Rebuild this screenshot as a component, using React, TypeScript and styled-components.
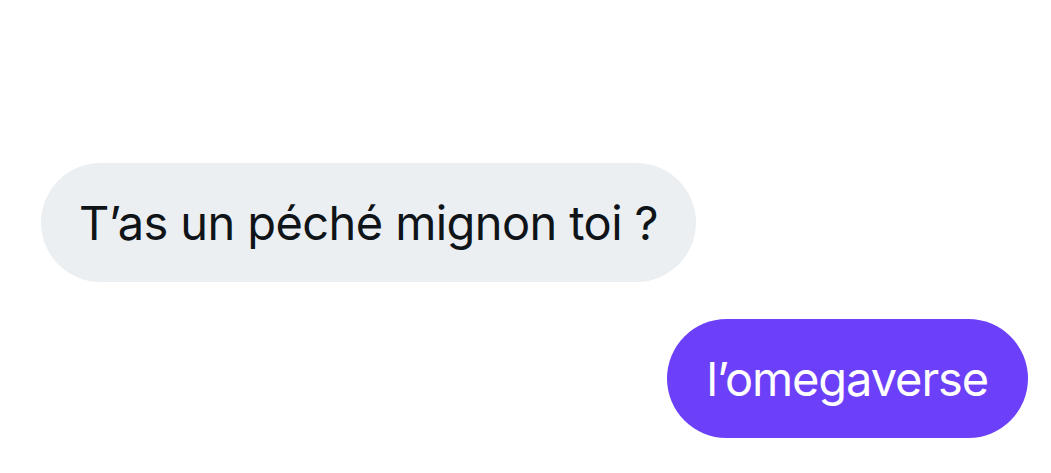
import React from "react";
import styled, { createGlobalStyle } from "styled-components";

const Global = createGlobalStyle`
  html, body { margin: 0; padding: 0; background: #ffffff; }
  body { font-family: Inter, "Noto Sans", "Liberation Sans", sans-serif; }
`;

const Thread = styled.div`
  display: flex;
  flex-direction: column;
  gap: 37px;
  padding: 163px 23px 0 41px;
  width: 1051px;
  height: 473px;
  box-sizing: border-box;
`;

const Row = styled.div<{ $mine?: boolean }>`
  display: flex;
  justify-content: ${(p) => (p.$mine ? "flex-end" : "flex-start")};
`;

const Bubble = styled.div<{ $mine?: boolean }>`
  display: flex;
  align-items: center;
  height: 119px;
  box-sizing: border-box;
  padding: ${(p) => (p.$mine ? "0 40px 0 39px" : "0 38px")};
  border-radius: 60px;
  background: ${(p) => (p.$mine ? "#6c40f8" : "#ebeff2")};
  color: ${(p) => (p.$mine ? "#ffffff" : "#0f1419")};
  font-size: 47px;
  letter-spacing: ${(p) => (p.$mine ? "-1.1px" : "-0.6px")};
  white-space: nowrap;
`;

export default function App() {
  return (
    <>
      <Global />
      <Thread>
        <Row>
          <Bubble>T’as un péché mignon toi ?</Bubble>
        </Row>
        <Row $mine>
          <Bubble $mine>l’omegaverse</Bubble>
        </Row>
      </Thread>
    </>
  );
}
